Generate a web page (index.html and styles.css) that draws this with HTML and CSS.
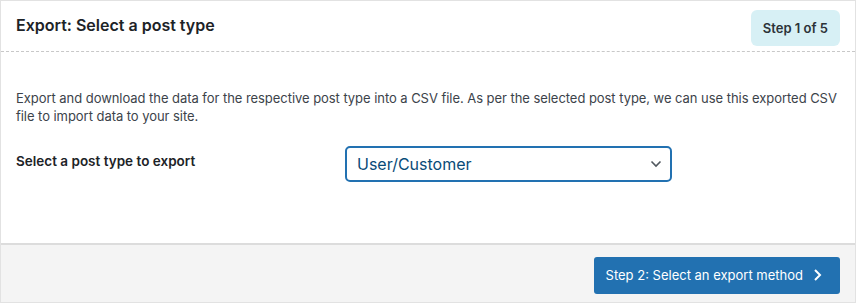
FILE: index.html
```html
<!DOCTYPE html>
<html>
<head>
    <title>Export</title>
    <link rel="stylesheet" href="styles.css">
</head>
<body>
    <div class="card">
        <div class="card-header">
            <h2>Export: Select a post type</h2>
            <span class="step-badge">Step 1 of 5</span>
        </div>
        <div class="card-body">
            <p class="intro">Export and download the data for the respective post type into a CSV file. As per the selected post type, we can use this exported CSV file to import data to your site.</p>
            <div class="form-row">
                <label for="postType">Select a post type to export</label>
                <div class="select-wrap">
                    <select id="postType">
                        <option>User/Customer</option>
                    </select>
                    <svg class="chevron" width="12" height="8" viewBox="0 0 12 8"><path d="M1.5 1.5 L6 6 L10.5 1.5" fill="none" stroke="#50575e" stroke-width="1.6"/></svg>
                </div>
            </div>
        </div>
        <div class="card-footer">
            <button type="button" class="button-primary">Step 2: Select an export method
                <svg width="9" height="14" viewBox="0 0 9 14"><path d="M2 2 L7 7 L2 12" fill="none" stroke="#fff" stroke-width="2"/></svg>
            </button>
        </div>
    </div>
</body>
</html>
```

FILE: styles.css
```css
body { margin: 0; font-family: Inter, "Noto Sans", sans-serif; color: #1d2327; background: #fff; }
.card { width: 854px; height: 301px; border: 1px solid #e2e2e2; display: flex; flex-direction: column; }
.card-header { height: 50px; display: flex; align-items: center; justify-content: space-between; padding: 0 15px 0 15px; border-bottom: 1px dashed #c8c8c8; }
.card-header h2 { margin: 0; font-size: 16px; font-weight: 600; padding-bottom: 2px; }
.step-badge { background: #d7f0f5; border-radius: 6px; padding: 10px 12px; font-size: 13px; font-weight: 600; color: #2c3338; margin-top: 4px; }
.card-body { flex: 1; padding: 37px 15px 0 15px; }
.intro { margin: 0; max-width: 826px; font-size: 13px; line-height: 18px; color: #3c434a; letter-spacing: -0.05px; }
.form-row { display: flex; align-items: center; margin-top: 21px; }
.form-row label { width: 329px; font-size: 13.5px; font-weight: 600; margin-top: -7px; }
.select-wrap { position: relative; }
select { width: 327px; height: 36px; border: 2px solid #2271b1; border-radius: 5px; background: #fff; font-family: inherit; font-size: 16px; color: #0a4b78; padding: 0 10px; appearance: none; -webkit-appearance: none; }
.chevron { position: absolute; right: 10px; top: 14px; }
.card-footer { height: 54px; background: #f4f4f4; border-top: 2px solid #dcdcdc; display: flex; justify-content: flex-end; align-items: center; padding: 3px 15px 0 15px; }
.button-primary { background: #2271b1; color: #fff; border: none; border-radius: 3px; height: 37px; padding: 0 18px 0 12px; font-family: inherit; font-size: 13px; display: flex; align-items: center; gap: 10px; }
```
